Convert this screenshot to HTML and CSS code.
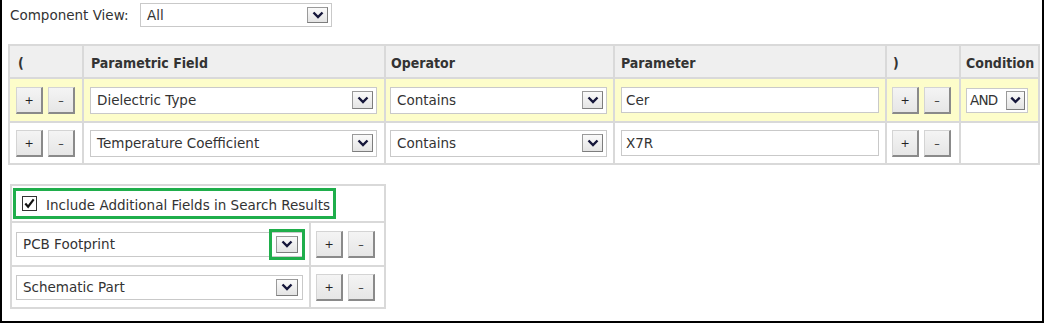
FILE: index.html
```html
<!DOCTYPE html>
<html>
<head>
<meta charset="utf-8">
<link rel="stylesheet" href="styles.css">
</head>
<body>
<div class="frame">
  <div class="view-row">
    <span class="label">Component View:</span>
    <div class="select sel-view"><span class="sel-text">All</span><span class="arrow"><svg viewBox="0 0 18 14" width="18" height="14"><path d="M4.5 4.5 L9 9 L13.5 4.5" fill="none" stroke="#15163a" stroke-width="2.4"/></svg></span></div>
  </div>

  <div class="grid main">
    <div class="hd">(</div>
    <div class="hd">Parametric Field</div>
    <div class="hd">Operator</div>
    <div class="hd">Parameter</div>
    <div class="hd">)</div>
    <div class="hd">Condition</div>

    <div class="cell yel pad-btn"><span class="btn">+</span><span class="btn">–</span></div>
    <div class="cell yel pad-field"><div class="select sel-field"><span class="sel-text">Dielectric Type</span><span class="arrow"><svg viewBox="0 0 18 14" width="18" height="14"><path d="M4.5 4.5 L9 9 L13.5 4.5" fill="none" stroke="#15163a" stroke-width="2.4"/></svg></span></div></div>
    <div class="cell yel pad-op"><div class="select sel-op"><span class="sel-text">Contains</span><span class="arrow"><svg viewBox="0 0 18 14" width="18" height="14"><path d="M4.5 4.5 L9 9 L13.5 4.5" fill="none" stroke="#15163a" stroke-width="2.4"/></svg></span></div></div>
    <div class="cell yel pad-param"><div class="input">Cer</div></div>
    <div class="cell yel pad-btn2"><span class="btn">+</span><span class="btn">–</span></div>
    <div class="cell yel pad-cond"><div class="select sel-cond"><span class="sel-text">AND</span><span class="arrow"><svg viewBox="0 0 18 14" width="18" height="14"><path d="M4.5 4.5 L9 9 L13.5 4.5" fill="none" stroke="#15163a" stroke-width="2.4"/></svg></span></div></div>

    <div class="cell row2 pad-btn"><span class="btn">+</span><span class="btn">–</span></div>
    <div class="cell row2 pad-field"><div class="select sel-field"><span class="sel-text">Temperature Coefficient</span><span class="arrow"><svg viewBox="0 0 18 14" width="18" height="14"><path d="M4.5 4.5 L9 9 L13.5 4.5" fill="none" stroke="#15163a" stroke-width="2.4"/></svg></span></div></div>
    <div class="cell row2 pad-op"><div class="select sel-op"><span class="sel-text">Contains</span><span class="arrow"><svg viewBox="0 0 18 14" width="18" height="14"><path d="M4.5 4.5 L9 9 L13.5 4.5" fill="none" stroke="#15163a" stroke-width="2.4"/></svg></span></div></div>
    <div class="cell row2 pad-param"><div class="input">X7R</div></div>
    <div class="cell row2 pad-btn2"><span class="btn">+</span><span class="btn">–</span></div>
    <div class="cell row2"></div>
  </div>

  <div class="grid extra">
    <div class="cell span2 chk-cell">
      <div class="hl-box"><span class="checkbox"><svg viewBox="0 0 14 14" width="13" height="13"><path d="M2.5 7 L5.5 10.5 L11.5 2.5" fill="none" stroke="#111" stroke-width="2.3"/></svg></span><span class="chk-label">Include Additional Fields in Search Results</span></div>
    </div>
    <div class="cell pad-ex"><div class="select sel-ex"><span class="sel-text">PCB Footprint</span><span class="arrow arrow-ex hl-arrow"><svg viewBox="0 0 18 14" width="18" height="14"><path d="M4.5 4.5 L9 9 L13.5 4.5" fill="none" stroke="#15163a" stroke-width="2.4"/></svg></span></div></div>
    <div class="cell pad-btn3"><span class="btn">+</span><span class="btn">–</span></div>
    <div class="cell pad-ex"><div class="select sel-ex"><span class="sel-text">Schematic Part</span><span class="arrow arrow-ex"><svg viewBox="0 0 18 14" width="18" height="14"><path d="M4.5 4.5 L9 9 L13.5 4.5" fill="none" stroke="#15163a" stroke-width="2.4"/></svg></span></div></div>
    <div class="cell pad-btn3"><span class="btn">+</span><span class="btn">–</span></div>
  </div>
</div>
</body>
</html>
```

FILE: styles.css
```css
html, body {
  margin: 0;
  padding: 0;
  background: #fff;
}
body {
  font-family: "DejaVu Sans", Tahoma, sans-serif;
  font-size: 13.5px;
  color: #333;
}
.frame {
  box-sizing: border-box;
  width: 1044px;
  height: 323px;
  border-left: 2px solid #000;
  border-right: 2px solid #000;
  border-bottom: 2px solid #000;
  padding: 3px 0 0 6px;
}
.view-row {
  display: flex;
  align-items: center;
  height: 24px;
}
.label {
  margin-left: 2px;
  width: 130px;
}
.select {
  box-sizing: border-box;
  display: flex;
  align-items: center;
  justify-content: space-between;
  background: #fff;
  border: 1px solid #c9c9c9;
}
.sel-text {
  padding-left: 6px;
  white-space: nowrap;
}
.arrow {
  box-sizing: border-box;
  display: flex;
  align-items: center;
  justify-content: center;
  width: 21px;
  height: 18px;
  margin-right: 3px;
  background: linear-gradient(#fafafa, #e4e4e4);
  border: 1px solid #9a9a9a;
  border-right-color: #7d7d7d;
  border-bottom-color: #7d7d7d;
}
.sel-view {
  width: 192px;
  height: 24px;
}
.sel-view .arrow {
  width: 21px;
  height: 16px;
}
.grid {
  display: grid;
  background: #d9d9d9;
  padding: 2px;
  gap: 2px;
}
.main {
  margin-top: 17px;
  width: 1032px;
  box-sizing: border-box;
  grid-template-columns: 72px 300px 227px 270px 72px 1fr;
  grid-template-rows: 31px 42px 40px;
}
.hd {
  background: #efefef;
  font-family: "DejaVu Sans Condensed", "DejaVu Sans", sans-serif;
  font-size: 14px;
  font-weight: bold;
  display: flex;
  align-items: center;
  padding-left: 8px;
  padding-top: 2px;
}
.hd:nth-child(2) { padding-left: 7px; }
.hd:nth-child(3) { padding-left: 5px; }
.hd:nth-child(4) { padding-left: 6px; }
.hd:nth-child(5) { padding-left: 6px; }
.hd:nth-child(6) { padding-left: 5px; }
.cell {
  background: #fff;
  display: flex;
  align-items: center;
  box-sizing: border-box;
}
.yel { background: #fdfdca; }
.pad-btn { padding-left: 6px; }
.pad-field { padding-left: 6px; }
.pad-op { padding-left: 4px; }
.pad-param { padding-left: 6px; }
.pad-btn2 { padding-left: 5px; }
.pad-cond { padding-left: 5px; }
.btn {
  box-sizing: border-box;
  display: inline-flex;
  align-items: center;
  justify-content: center;
  width: 27px;
  height: 27px;
  background: linear-gradient(#f4f4f4, #e6e6e6);
  border: 1px solid #d4d4d4;
  border-right: 2px solid #8a8a8a;
  border-bottom: 2px solid #8a8a8a;
  font-size: 11px;
  color: #222;
  padding-top: 2px;
}
.btn + .btn { margin-left: 5px; }
.sel-field {
  width: 287px;
  height: 27px;
}
.sel-op {
  width: 217px;
  height: 27px;
}
.input {
  box-sizing: border-box;
  width: 258px;
  height: 26px;
  background: #fff;
  border: 1px solid #c9c9c9;
  display: flex;
  align-items: center;
  padding-left: 4px;
}
.sel-cond {
  width: 62px;
  height: 25px;
}
.sel-cond .sel-text { padding-left: 3px; letter-spacing: -0.8px; }
.sel-cond .arrow { width: 19px; height: 19px; margin-right: 2px; }
.extra {
  margin-top: 19px;
  margin-left: 2px;
  width: 376px;
  box-sizing: border-box;
  grid-template-columns: 297px 1fr;
  grid-template-rows: 35px 42px 40px;
}
.span2 { grid-column: 1 / 3; }
.chk-cell { padding-left: 1px; }
.hl-box {
  box-sizing: border-box;
  display: flex;
  align-items: center;
  width: 323px;
  height: 31px;
  border: 3px solid #1fae4b;
  padding-left: 6px;
}
.checkbox {
  box-sizing: border-box;
  display: inline-flex;
  align-items: center;
  justify-content: center;
  width: 15px;
  height: 15px;
  border: 1px solid #333;
  background: #fff;
  margin-right: 9px;
}
.chk-label { padding-top: 3px; }
.pad-ex { padding-left: 4px; }
.sel-ex {
  width: 287px;
  height: 25px;
}
.arrow-ex {
  width: 22px;
  height: 17px;
  margin-right: 4px;
}
.hl-arrow {
  outline: 3px solid #1fae4b;
  outline-offset: 4px;
}
.pad-btn3 { padding-left: 5px; }
```
